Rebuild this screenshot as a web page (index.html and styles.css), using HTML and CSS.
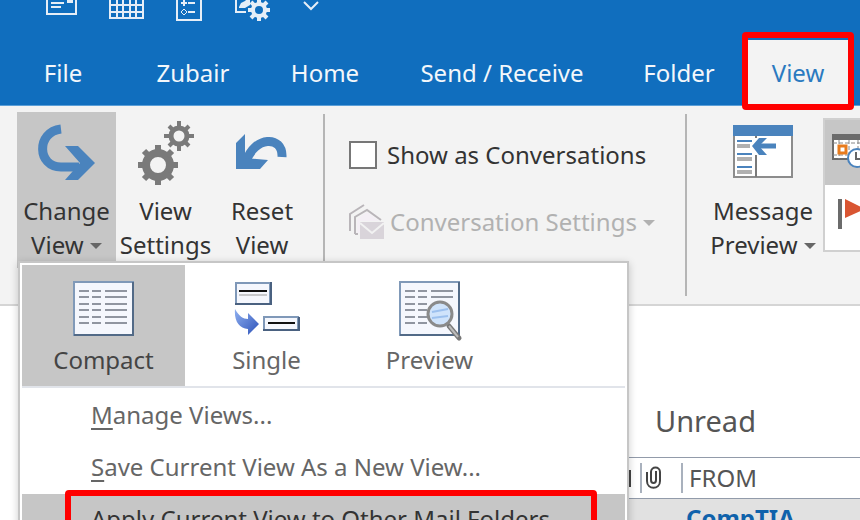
FILE: index.html
```html
<!DOCTYPE html>
<html lang="en">
<head>
    <meta charset="UTF-8">
    <meta name="viewport" content="width=device-width, initial-scale=1.0">
    <title>Mail - View</title>
    <link rel="stylesheet" href="styles.css">
</head>
<body>

<header class="titlebar">
    <div class="quick-access">
        <button type="button" aria-label="New mail">
            <svg width="32" height="24" fill="none" stroke="#e6eef7" stroke-width="2">
                <path d="M1 -4V14H30V-4M5 3H18M5 7H15"/>
                <path d="M22 0H26V2H22Z" fill="#e6eef7"/>
            </svg>
        </button>
        <button type="button" aria-label="Calendar">
            <svg width="36" height="24" fill="none" stroke="#e6eef7" stroke-width="2">
                <path d="M1 -4V18H34V-4M1 5H34M1 12H34M8 -2V18M14 -2V18M21 5V18M27 5V18M21 -2V5H27V-2"/>
            </svg>
        </button>
        <button type="button" aria-label="Tasks">
            <svg width="28" height="24" fill="none" stroke="#e6eef7" stroke-width="2">
                <path d="M1 -4V20H25V-4M12 3H19M12 12H19M5 3H11M8 0V6"/>
                <path d="M8 9L11 12L8 15L5 12Z" stroke-width="1"/>
            </svg>
        </button>
        <button type="button" aria-label="Settings">
            <svg width="36" height="24" fill="none" stroke="#e6eef7" stroke-width="2">
                <path d="M1 -4V12H11"/>
                <path d="M4 7L6 3L10 1L12 -1H15V5L10 8H4Z" fill="#e6eef7" stroke="none"/>
                <circle cx="24" cy="10" r="6" stroke-width="4"/>
                <path d="M24 -1V4M24 16V21M13 10H18M30 10H35M16 2L20 6M28 14L32 18M32 2L28 6M20 14L16 18" stroke-width="4"/>
            </svg>
        </button>
        <button type="button" aria-label="More">
            <svg width="18" height="24" fill="none" stroke="#e6eef7" stroke-width="2">
                <path d="M2 2L9 9L16 2"/>
            </svg>
        </button>
    </div>
    <nav class="tabs">
        <a href="#">File</a>
        <a href="#">Zubair</a>
        <a href="#">Home</a>
        <a href="#">Send / Receive</a>
        <a href="#">Folder</a>
        <a href="#" class="active">View</a>
    </nav>
</header>

<section class="ribbon">
    <div class="group current-view">
        <button type="button" class="big-btn open">
            <svg width="60" height="60" viewBox="0 0 60 60">
                <path d="M24 5C-1 8 0 43 24 43H42" fill="none" stroke="#4a83bd" stroke-width="9"/>
                <path d="M28 22H41L58 39L41 56H28L43 39Z" fill="#4a83bd"/>
            </svg>
            <span>Change<br>View <i class="caret"></i></span>
        </button>
        <button type="button" class="big-btn">
            <svg width="60" height="60" viewBox="0 0 60 60" fill="none" stroke="#7a7a7a">
                <circle cx="22" cy="41" r="12" stroke-width="8"/>
                <path d="M22 21V29M22 53V61M2 41H10M34 41H42M8 27L13 32M31 50L36 55M36 27L31 32M13 50L8 55" stroke-width="6"/>
                <circle cx="43" cy="12" r="8" stroke-width="5"/>
                <path d="M43 -3V4M43 20V27M28 12H35M51 12H58M33 2L37 6M49 18L53 22M53 2L49 6M37 18L33 22" stroke-width="4"/>
            </svg>
            <span>View<br>Settings</span>
        </button>
        <button type="button" class="big-btn reset">
            <svg width="60" height="60" viewBox="0 0 60 60">
                <path d="M14 38C22 12 51 11 50 33" fill="none" stroke="#4a83bd" stroke-width="9"/>
                <path d="M4 19L13 10V34L36 36L28 45H4Z" fill="#4a83bd"/>
            </svg>
            <span>Reset<br>View</span>
        </button>
    </div>

    <div class="group messages">
        <label class="check"><input type="checkbox"> Show as Conversations</label>
        <button type="button" class="conv-btn" disabled>
            <svg width="36" height="36" viewBox="0 0 36 36" fill="none" stroke="#b9b5b9" stroke-width="2">
                <path d="M1 27V10L15 1M6 30H9M6 30V13L18 6L32 16"/>
                <path d="M8 15L18 8L30 17H11V29H8Z" fill="#f4eff5" stroke="none"/>
                <path d="M11 18H35V35H11Z" fill="#d9d4da" stroke="none"/>
                <path d="M11 19L23 29L35 19" stroke="#f2f2f2"/>
            </svg>
            <span>Conversation Settings <i class="caret"></i></span>
        </button>
    </div>

    <div class="group arrangement">
        <button type="button" class="big-btn">
            <svg width="62" height="60" viewBox="0 0 62 60">
                <path d="M2 6H60V53H2Z" fill="#fff" stroke="#8c8c8c" stroke-width="2"/>
                <path d="M1 1H61V12H1Z" fill="#4a83bd"/>
                <path d="M24 12V14M24 31V53" stroke="#7a7a7a" stroke-width="2"/>
                <path d="M5 17H20M5 30H20M5 43H20" stroke="#4a83bd" stroke-width="2"/>
                <path d="M5 22H18M5 35H20M5 48H20" stroke="#b0b0b0" stroke-width="4"/>
                <path d="M44 22H26" stroke="#4a83bd" stroke-width="5"/>
                <path d="M27 14H35L27 22L35 31H27L20 22Z" fill="#4a83bd"/>
            </svg>
            <span>Message<br>Preview <i class="caret"></i></span>
        </button>
        <div class="gallery-list">
            <button type="button" class="selected" aria-label="Date">
                <svg width="40" height="40" viewBox="0 0 40 40">
                    <path d="M2 4H40V26H2Z" fill="#fff" stroke="#6b6b6b" stroke-width="2"/>
                    <path d="M1 1H40V7H1Z" fill="#6b6b6b"/>
                    <path d="M8 7V26M18 7V26M27 7V26M2 10H38M2 22H38" stroke="#888" stroke-width="1" stroke-dasharray="4 2"/>
                    <path d="M8 13H15V20H8Z" fill="#fff" stroke="#e87b1c" stroke-width="3"/>
                    <circle cx="26" cy="25" r="9" fill="#fff" stroke="#4a83bd" stroke-width="2"/>
                    <path d="M25 19V26H31" fill="none" stroke="#666" stroke-width="2"/>
                </svg>
            </button>
            <button type="button" aria-label="Flag">
                <svg width="40" height="40" viewBox="0 0 40 40">
                    <path d="M7 1H11V31H7Z" fill="#6b6b6b"/>
                    <path d="M14 1L34 11L14 20Z" fill="#d95532"/>
                </svg>
            </button>
        </div>
    </div>
</section>

<div class="view-menu">
    <div class="view-options">
        <button type="button" class="selected">
            <svg width="62" height="60" viewBox="0 0 62 60">
                <path d="M1 1H60V54H1Z" fill="#f5f7fd" stroke="#8099b8" stroke-width="2"/>
                <path d="M60 1V54H1" fill="none" stroke="#526a87" stroke-width="2"/>
                <path d="M6 10H16M19 10H28M32 10H54M6 16H16M19 16H28M32 16H54M6 23H16M19 23H28M32 23H54M6 29H16M19 29H28M32 29H54M6 36H16M19 36H28M32 36H54M6 42H16M19 42H28M32 42H54" stroke="#9095a0" stroke-width="2"/>
            </svg>
            Compact
        </button>
        <button type="button">
            <svg width="66" height="60" viewBox="0 0 66 60">
                <defs>
                    <linearGradient id="blue" x1="0" y1="0" x2="1" y2="1">
                        <stop offset="0" stop-color="#8fb0f0"/>
                        <stop offset="1" stop-color="#2c51b8"/>
                    </linearGradient>
                </defs>
                <path d="M2 2H36V23H2ZM30 36H64V49H30Z" fill="#f5f7fd" stroke="#7f98b8" stroke-width="2"/>
                <path d="M37 1V23H1M65 36V49H29" fill="none" stroke="#4a6180" stroke-width="2"/>
                <path d="M5 10H33M34 42H61" stroke="#111" stroke-width="2"/>
                <path d="M5 14H33" stroke="#999"/>
                <path d="M1 28C5 35 9 38 14 38V32L25 43L14 54V48C5 47 0 40 1 28Z" fill="url(#blue)"/>
            </svg>
            Single
        </button>
        <button type="button">
            <svg width="62" height="60" viewBox="0 0 62 60">
                <path d="M1 1H60V54H1Z" fill="#f5f7fd" stroke="#8099b8" stroke-width="2"/>
                <path d="M60 1V54H1" fill="none" stroke="#526a87" stroke-width="2"/>
                <path d="M6 10H16M19 10H28M32 10H54M6 16H16M19 16H28M32 16H54M6 23H16M19 23H28M6 29H16M19 29H28M6 36H16M19 36H28M6 42H16M19 42H28" stroke="#9095a0" stroke-width="2"/>
                <path d="M50 45L60 57" stroke="#777" stroke-width="5" stroke-linecap="round"/>
                <path d="M50 45L59 56" stroke="#bbb" stroke-width="2"/>
                <circle cx="41" cy="33" r="12" fill="#cfe3fb" stroke="#8a8a8a" stroke-width="3"/>
                <path d="M33 31L49 28M33 37L49 35" stroke="#9cc0ee" stroke-width="2"/>
            </svg>
            Preview
        </button>
    </div>
    <div class="menu-items">
        <button type="button"><span><u>M</u>anage Views...</span></button>
        <button type="button"><span><u>S</u>ave Current View As a New View...</span></button>
        <button type="button" class="hover marked"><span><u>A</u>pply Current View to Other Mail Folders...</span></button>
    </div>
</div>

<main class="mail">
    <h2>Unread</h2>
    <table>
        <thead>
            <tr>
                <th class="col-icon">
                    <svg width="32" height="24" viewBox="0 0 32 24" fill="none" stroke="#444" stroke-width="2">
                        <path d="M14 5H22V20H14Z"/>
                    </svg>
                </th>
                <th class="col-attach">
                    <svg width="18" height="24" viewBox="0 0 18 24" fill="none" stroke="#444" stroke-width="2">
                        <path d="M2 6V15C2 24 15 24 15 15V6C15 0 6 0 6 6V14C6 18 11 18 11 14V5"/>
                    </svg>
                </th>
                <th>FROM</th>
            </tr>
        </thead>
        <tbody>
            <tr>
                <td></td>
                <td></td>
                <td>CompTIA</td>
            </tr>
        </tbody>
    </table>
</main>

</body>
</html>
```

FILE: styles.css
```css
* {
    box-sizing: border-box;
}

body {
    margin: 0;
    height: 100vh;
    overflow: hidden;
    position: relative;
    background: #fff;
    color: #333;
    font-family: "Noto Sans", "Open Sans", sans-serif;
    font-size: 24px;
    line-height: 34px;
}

button {
    margin: 0;
    padding: 0;
    border: none;
    background: none;
    color: inherit;
    font: inherit;
}

svg {
    display: block;
    flex: none;
    overflow: visible;
}

/* Title bar and tabs */
.titlebar {
    background: #106ebe;
    border-bottom: 1px solid #5b9fd8;
}

.quick-access {
    display: flex;
    gap: 31px;
    height: 40px;
    padding-left: 46px;
    overflow: hidden;
}

.quick-access button {
    height: 24px;
}

.tabs {
    display: grid;
    grid-template-columns: 126px 134px 130px 224px 130px 110px;
    height: 65px;
}

.tabs a {
    display: flex;
    align-items: center;
    justify-content: center;
    color: #f3f7fb;
    text-decoration: none;
    white-space: nowrap;
}

.tabs .active {
    position: relative;
    margin: 0 6px 0 4px;
    background: #f3f3f3;
    color: #2b7ac0;
}

.tabs .active::after {
    content: "";
    position: absolute;
    inset: -8px -6px -5px;
    border: 6px solid #f00;
    border-radius: 4px;
    z-index: 1;
}

/* Ribbon */
.ribbon {
    display: flex;
    height: 200px;
    padding-left: 17px;
    background: #f3f3f3;
    border-bottom: 2px solid #d5d5d5;
    overflow: hidden;
}

.group {
    display: flex;
    flex: none;
}

.current-view {
    width: 306px;
}

.big-btn {
    display: flex;
    flex-direction: column;
    align-items: center;
    justify-content: space-between;
    width: 99px;
    height: 156px;
    margin-top: 6px;
    padding: 12px 0 6px;
    white-space: nowrap;
}

.big-btn.reset {
    width: 94px;
}

.big-btn.open {
    background: #c6c6c6;
}

.caret {
    display: inline-block;
    vertical-align: 5px;
    border: 6px solid transparent;
    border-top-color: #666;
    border-bottom: none;
}

.messages {
    flex-direction: column;
    gap: 32px;
    width: 362px;
    height: 182px;
    margin-top: 8px;
    padding: 24px 0 0 24px;
    border-left: 2px solid #b5b5b5;
}

.check {
    display: flex;
    align-items: center;
    gap: 10px;
    white-space: nowrap;
}

.check input {
    appearance: none;
    width: 28px;
    height: 28px;
    margin: 0;
    border: 2px solid #777;
    background: #fff;
}

.conv-btn {
    display: flex;
    align-items: center;
    gap: 5px;
    color: #b1b1b1;
    white-space: nowrap;
}

.conv-btn .caret {
    border-top-color: #b1b1b1;
}

.arrangement {
    height: 182px;
    margin-top: 8px;
    padding-left: 20px;
    border-left: 2px solid #b5b5b5;
}

.arrangement .big-btn {
    width: 112px;
    margin-top: -2px;
}

.gallery-list {
    width: 80px;
    height: 134px;
    margin: 4px 0 0 4px;
    border: 2px solid #d0d0d0;
    background: #fff;
}

.gallery-list button {
    display: block;
    width: 100%;
    height: 65px;
    padding: 8px 6px;
}

.gallery-list .selected {
    background: #c6c6c6;
}

/* Change View drop-down */
.view-menu {
    position: absolute;
    top: 261px;
    left: 18px;
    z-index: 2;
    width: 611px;
    padding: 2px;
    background: #fff;
    border: 2px solid #c6c6c6;
    box-shadow: 0 2px 8px rgba(0, 0, 0, 0.2);
    color: #666;
}

.view-options {
    display: grid;
    grid-template-columns: 163px 163px 163px;
    height: 123px;
    border-bottom: 2px solid #e1e4ea;
}

.view-options button {
    display: flex;
    flex-direction: column;
    align-items: center;
    gap: 2px;
    padding-top: 16px;
}

.view-options .selected {
    background: #c6c6c6;
    color: #444;
}

.menu-items {
    padding-top: 2px;
}

.menu-items button {
    display: block;
    position: relative;
    width: 100%;
    height: 52px;
    padding: 0 0 2px 69px;
    text-align: left;
    white-space: nowrap;
}

.menu-items u {
    text-underline-offset: 4px;
}

.menu-items .hover {
    background: #c6c6c6;
    color: #333;
}

.menu-items .marked::after {
    content: "";
    position: absolute;
    inset: -4px 28px -4px 43px;
    border: 6px solid #f00;
    border-radius: 4px;
}

/* Message list */
.mail {
    margin-left: 600px;
    padding-top: 96px;
}

.mail h2 {
    margin: 0;
    padding: 1px 0 18px 55px;
    color: #555;
    font-size: 29px;
    font-weight: normal;
    line-height: 36px;
}

.mail table {
    width: 100%;
    table-layout: fixed;
    border-collapse: collapse;
}

.mail th {
    height: 41px;
    padding: 0 0 0 8px;
    border-top: 1px solid #929baa;
    border-bottom: 1px solid #929baa;
    color: #555;
    font-weight: normal;
    text-align: left;
    background: linear-gradient(#a9b1bd, #a9b1bd) 0 50% / 2px 30px no-repeat;
}

.mail .col-icon {
    width: 40px;
    background: none;
}

.mail .col-attach {
    width: 41px;
    padding-left: 5px;
}

.mail td {
    padding: 2px 0 6px 5px;
    background: #e1e1e1;
    color: #0f62ab;
    font-weight: bold;
}
```
